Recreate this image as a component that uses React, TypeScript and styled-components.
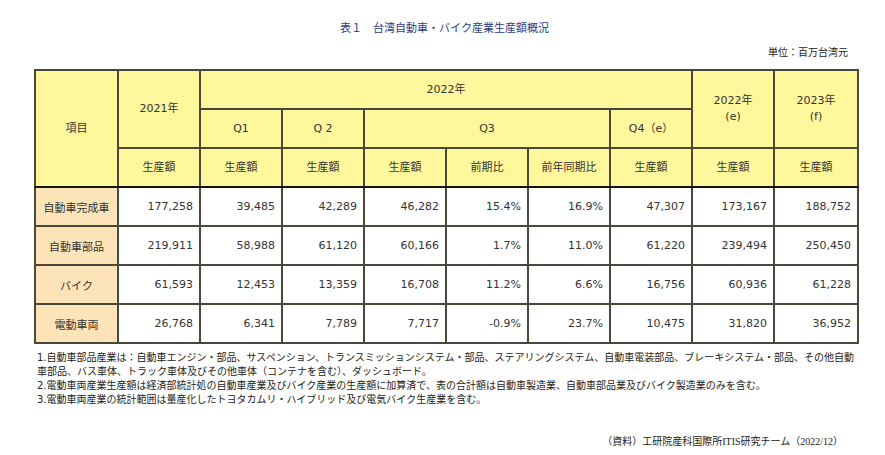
import React from "react";
import styled, { createGlobalStyle } from "styled-components";

const GlobalStyle = createGlobalStyle`
  html, body { margin: 0; padding: 0; background: #ffffff; }
  body { font-family: "DejaVu Sans", "Noto Sans CJK JP", sans-serif; color: #333; }
`;

const Page = styled.div`
  width: 885px;
  height: 455px;
  box-sizing: border-box;
  padding-top: 19px;
  display: flex;
  flex-direction: column;
`;

const Title = styled.div`
  font-family: "Noto Sans CJK JP", sans-serif;
  text-align: center;
  font-size: 11px;
  line-height: 16px;
  color: #2f3c86;
  padding-left: 4px;
`;

const Unit = styled.div`
  margin-top: 11px;
  text-align: right;
  padding-right: 37px;
  font-family: "Liberation Serif", "Noto Sans CJK JP", serif;
  font-size: 10px;
  line-height: 14px;
  color: #222;
`;

const Table = styled.table`
  margin: 9px 0 0 34px;
  width: 823px;
  table-layout: fixed;
  border-collapse: collapse;
  border: 2px solid #3f3d30;
  font-size: 11px;
  color: #333;
`;

const Row = styled.tr`
  height: 39px;
`;

const HeadCell = styled.th<{ $last?: boolean }>`
  background: #fff79c;
  border: 2px solid #4a4838;
  ${(p) => (p.$last ? "border-bottom: 2px solid #151515;" : "")}
  font-weight: normal;
  text-align: center;
  vertical-align: middle;
  line-height: 16px;
  padding: 0;
  font-family: "DejaVu Sans", "Noto Sans CJK JP", sans-serif;
`;

const LabelCell = styled.td`
  background: #fde3b8;
  border: 2px solid #4a4838;
  text-align: center;
  padding: 0;
  font-family: "Noto Sans CJK JP", sans-serif;
`;

const NumCell = styled.td`
  background: #ffffff;
  border: 2px solid #4a4838;
  text-align: right;
  padding: 0 6px 0 0;
`;

const Notes = styled.div`
  margin: 7px 0 0 37px;
  font-family: "DejaVu Sans", "Noto Sans CJK JP", sans-serif;
  font-size: 10px;
  line-height: 14px;
  color: #222;
  white-space: nowrap;
`;

const Source = styled.div`
  margin-top: 28px;
  text-align: right;
  padding-right: 42px;
  font-family: "Liberation Serif", "Noto Sans CJK JP", serif;
  font-size: 10px;
  line-height: 14px;
  color: #222;
`;

const rows: { label: string; values: string[] }[] = [
  { label: "自動車完成車", values: ["177,258", "39,485", "42,289", "46,282", "15.4%", "16.9%", "47,307", "173,167", "188,752"] },
  { label: "自動車部品", values: ["219,911", "58,988", "61,120", "60,166", "1.7%", "11.0%", "61,220", "239,494", "250,450"] },
  { label: "バイク", values: ["61,593", "12,453", "13,359", "16,708", "11.2%", "6.6%", "16,756", "60,936", "61,228"] },
  { label: "電動車両", values: ["26,768", "6,341", "7,789", "7,717", "-0.9%", "23.7%", "10,475", "31,820", "36,952"] },
];

const colWidths = [83, 82, 82, 82, 82, 82, 82, 82, 82, 84];

export default function App() {
  return (
    <>
      <GlobalStyle />
      <Page>
        <Title>表１　台湾自動車・バイク産業生産額概況</Title>
        <Unit>単位：百万台湾元</Unit>
        <Table>
          <colgroup>
            {colWidths.map((w, i) => (
              <col key={i} style={{ width: w }} />
            ))}
          </colgroup>
          <thead>
            <Row>
              <HeadCell rowSpan={3} $last>項目</HeadCell>
              <HeadCell rowSpan={2}>2021年</HeadCell>
              <HeadCell colSpan={6}>2022年</HeadCell>
              <HeadCell rowSpan={2}>
                2022年
                <br />
                (e)
              </HeadCell>
              <HeadCell rowSpan={2}>
                2023年
                <br />
                (f)
              </HeadCell>
            </Row>
            <Row>
              <HeadCell>Q1</HeadCell>
              <HeadCell>Q 2</HeadCell>
              <HeadCell colSpan={3}>Q3</HeadCell>
              <HeadCell>Q4（e）</HeadCell>
            </Row>
            <Row>
              <HeadCell $last>生産額</HeadCell>
              <HeadCell $last>生産額</HeadCell>
              <HeadCell $last>生産額</HeadCell>
              <HeadCell $last>生産額</HeadCell>
              <HeadCell $last>前期比</HeadCell>
              <HeadCell $last>前年同期比</HeadCell>
              <HeadCell $last>生産額</HeadCell>
              <HeadCell $last>生産額</HeadCell>
              <HeadCell $last>生産額</HeadCell>
            </Row>
          </thead>
          <tbody>
            {rows.map((r) => (
              <Row key={r.label}>
                <LabelCell>{r.label}</LabelCell>
                {r.values.map((v, i) => (
                  <NumCell key={i}>{v}</NumCell>
                ))}
              </Row>
            ))}
          </tbody>
        </Table>
        <Notes>
          1.自動車部品産業は：自動車エンジン・部品、サスペンション、トランスミッションシステム・部品、ステアリングシステム、自動車電装部品、ブレーキシステム・部品、その他自動
          <br />
          車部品、バス車体、トラック車体及びその他車体（コンテナを含む）、ダッシュボード。
          <br />
          2.電動車両産業生産額は経済部統計処の自動車産業及びバイク産業の生産額に加算済で、表の合計額は自動車製造業、自動車部品業及びバイク製造業のみを含む。
          <br />
          3.電動車両産業の統計範囲は量産化したトヨタカムリ・ハイブリッド及び電気バイク生産業を含む。
        </Notes>
        <Source>（資料）工研院産科国際所ITIS研究チーム（2022/12）</Source>
      </Page>
    </>
  );
}
